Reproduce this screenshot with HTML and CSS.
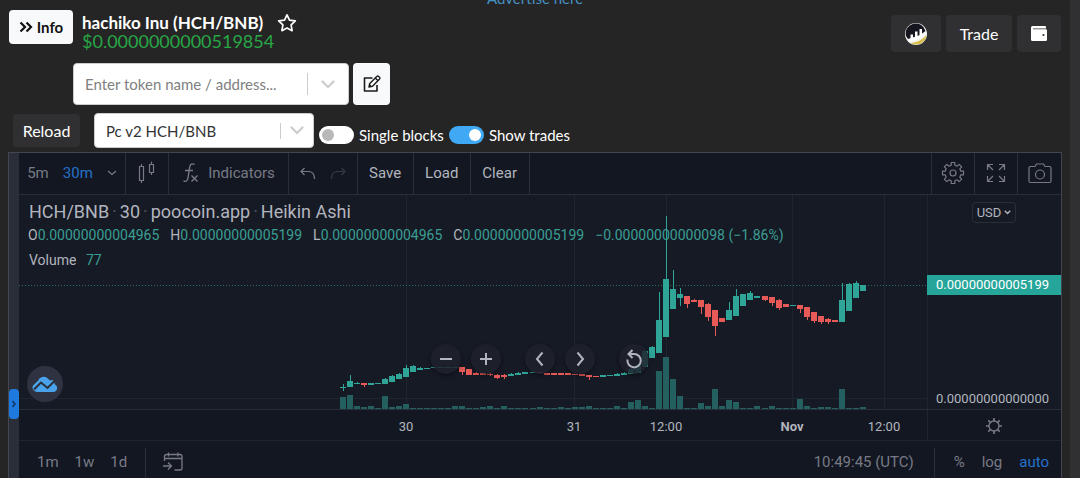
FILE: index.html
```html
<!DOCTYPE html>
<html lang="en">
<head>
<meta charset="utf-8">
<meta name="viewport" content="width=device-width, initial-scale=1">
<title>hachiko Inu (HCH/BNB)</title>
<link rel="stylesheet" href="styles.css">
</head>
<body>
<div class="page">
  <div class="ad"><a class="ad-link" href="#">Advertise here</a></div>

  <header class="top">
    <button class="btn btn-light info" type="button">
      <svg class="info-icon" width="14" height="12" viewBox="0 0 14 12"><path d="M1.500 1.500 6 6l-4.500 4.500M7.500 1.500 12 6l-4.500 4.500" fill="none" stroke="currentColor" stroke-width="2.200"/></svg>
      Info
    </button>
    <div class="token">
      <h1 class="token-name">hachiko Inu (HCH/BNB)
        <button class="star" type="button" aria-label="Favourite"><svg width="20" height="20" viewBox="0 0 20 20"><path d="M10 1.800l2.500 5.300 5.800.8-4.200 4 1 5.800L10 14.900l-5.100 2.800 1-5.800-4.200-4 5.800-.8z" fill="none" stroke="currentColor" stroke-width="1.700" stroke-linejoin="round"/></svg></button>
      </h1>
      <div class="token-price">$0.0000000000519854</div>
    </div>
    <div class="actions">
      <button class="btn btn-dark wide" type="button" aria-label="Chart service">
        <svg width="22" height="22" viewBox="0 0 22 22"><circle cx="11" cy="11" r="11" fill="#f4f4f0"/><path d="M1 13A10 10 0 1 1 20.500 8L15 12 3 16z" fill="#14151f"/><path d="M5.500 20c6-.5 12-3 16-8A10.500 10.500 0 0 1 5.500 20z" fill="#d8bd4a"/><path d="M5.500 16.500v-5h2.500V16M10 15.500V8.500h2.500v6.500M14.500 14V6h2.500v7" fill="#fff"/><path d="M3 17.500Q12 17 18 11.500" fill="none" stroke="#fff" stroke-width="2"/></svg>
      </button>
      <button class="btn btn-dark trade" type="button">Trade</button>
      <button class="btn btn-dark wallet" type="button" aria-label="Wallet">
        <svg width="16" height="15" viewBox="0 0 16 15"><path d="M1.500 0h12.500a1 1 0 0 1 1 1v1.500h-13v.8h13a1 1 0 0 1 1 1V13.500a1.500 1.500 0 0 1-1.500 1.500H1.500A1.500 1.500 0 0 1 0 13.500v-12A1.500 1.500 0 0 1 1.500 0z" fill="#fff"/><circle cx="12.500" cy="9" r="1.100" fill="#303032"/></svg>
      </button>
    </div>
  </header>

  <div class="search">
    <div class="field search-field">
      <input class="field-control" type="text" placeholder="Enter token name / address..." aria-label="Token name or address">
      <span class="field-sep"></span>
      <svg class="field-arrow" width="14" height="9" viewBox="0 0 14 9"><path d="M1.500 1.500 7 7l5.500-5.500" fill="none" stroke="#ccc" stroke-width="2.200" stroke-linecap="round"/></svg>
    </div>
    <button class="btn btn-light edit" type="button" aria-label="Edit">
      <svg width="18" height="18" viewBox="0 0 18 18"><path d="M9.500 3H1.500v13h12.500v-6" fill="none" stroke="#1b1b1b" stroke-width="1.600" stroke-linejoin="round"/><path d="M6 12l.6-3.300L14 1.300q.8-.6 1.600.1l.9.9q.8.800.1 1.600L9.300 11.400zM12.300 3l2.700 2.700M6 12l2-2" fill="none" stroke="#1b1b1b" stroke-width="1.400" stroke-linejoin="round"/></svg>
    </button>
  </div>

  <div class="options">
    <button class="btn btn-dark reload" type="button">Reload</button>
    <div class="field pair-field">
      <select class="field-control pair" aria-label="Pair"><option>Pc v2 HCH/BNB</option></select>
      <span class="field-sep short"></span>
      <svg class="field-arrow" width="14" height="9" viewBox="0 0 14 9"><path d="M1.500 1.500 7 7l5.500-5.500" fill="none" stroke="#ccc" stroke-width="2.200" stroke-linecap="round"/></svg>
    </div>
    <div class="switches">
      <input class="switch" type="checkbox" id="blocks"><label class="switch-label" for="blocks">Single blocks</label>
      <input class="switch" type="checkbox" id="trades" checked><label class="switch-label" for="trades">Show trades</label>
    </div>
  </div>

  <main class="chart">
    <div class="drawer"><button class="drawer-handle" type="button" aria-label="Open drawing tools"><svg width="6" height="8" viewBox="0 0 6 8"><path d="M1.500 1 4 4 1.500 7" fill="none" stroke="#12305c" stroke-width="1.400"/></svg></button></div>
    <div class="board">
      <div class="toolbar">
        <div class="tool-group intervals">
          <button class="tool" type="button">5m</button>
          <button class="tool active" type="button">30m</button>
          <svg width="10" height="6" viewBox="0 0 10 6"><path d="M1 1l4 3.500L9 1" fill="none" stroke="currentColor" stroke-width="1.200"/></svg>
        </div>
        <button class="tool tool-group square" type="button" aria-label="Chart style">
          <svg width="18" height="24" viewBox="0 0 18 24"><path d="M1.500 5.500h4v14h-4zM3.500 3v2.500M3.500 19.500V22M11.500 3.500h4v8h-4zM13.500.500v3M13.500 11.500V14" fill="none" stroke="currentColor" stroke-width="1.200"/></svg>
        </button>
        <button class="tool tool-group indicators" type="button">
          <svg width="18" height="22" viewBox="0 0 18 22"><path d="M12.500 2.500Q8.500.5 7.700 5L6 16Q5.200 20.500 1.500 19M3 8.500h8M9.500 13.500l6 6M15.500 13.500l-6 6" fill="none" stroke="currentColor" stroke-width="1.400"/></svg>
          Indicators
        </button>
        <div class="tool-group history">
          <button class="tool" type="button" aria-label="Undo"><svg width="16" height="13" viewBox="0 0 16 13"><path d="M4.500 1 1 4.500 4.500 8M1 4.500h8Q14.500 5 14.500 12" fill="none" stroke="currentColor" stroke-width="1.200"/></svg></button>
          <button class="tool dim" type="button" aria-label="Redo"><svg width="16" height="13" viewBox="0 0 16 13"><path d="M11.500 1 15 4.500 11.500 8M15 4.500H7Q1.500 5 1.500 12" fill="none" stroke="currentColor" stroke-width="1.200"/></svg></button>
        </div>
        <button class="tool tool-group bright" type="button">Save</button>
        <button class="tool tool-group bright" type="button">Load</button>
        <button class="tool tool-group bright" type="button">Clear</button>
        <div class="tool-space"></div>
        <button class="tool tool-group corner" type="button" aria-label="Settings">
          <svg width="24" height="24" viewBox="0 0 24 24"><path d="M10.200 1.500h3.600v2.700l2.400 1 1.900-1.900 2.600 2.600-1.900 1.900 1 2.400h2.700v3.600h-2.700l-1 2.400 1.900 1.900-2.600 2.600-1.900-1.900-2.400 1v2.700h-3.600v-2.700l-2.400-1-1.900 1.900-2.600-2.600 1.900-1.900-1-2.400H1.500v-3.600h2.700l1-2.400-1.900-1.900 2.600-2.600 1.900 1.900 2.400-1z" fill="none" stroke="currentColor" stroke-width="1.200" stroke-linejoin="round"/><circle cx="12" cy="12" r="3" fill="none" stroke="currentColor" stroke-width="1.200"/></svg>
        </button>
        <button class="tool tool-group corner" type="button" aria-label="Fullscreen">
          <svg width="20" height="20" viewBox="0 0 20 20"><path d="M1.500 7V1.500H7M1.500 1.500l5.500 5.500M13 1.500h5.500V7M18.500 1.500 13 7M1.500 13v5.500H7M1.500 18.500 7 13M18.500 13v5.500H13M18.500 18.500 13 13" fill="none" stroke="currentColor" stroke-width="1.200"/></svg>
        </button>
        <button class="tool tool-group corner last" type="button" aria-label="Snapshot">
          <svg width="24" height="21" viewBox="0 0 24 21"><path d="M2.500 3.500h4.500L8.500 1h7L17 3.500h4.500q1.500 0 1.500 1.500v13q0 1.500-1.500 1.500h-19Q1 19.500 1 18V5q0-1.500 1.500-1.500z" fill="none" stroke="currentColor" stroke-width="1.200"/><circle cx="12" cy="11.500" r="4.500" fill="none" stroke="currentColor" stroke-width="1.200"/></svg>
        </button>
      </div>

      <div class="plot">
        <div class="pane">
          <svg class="series" id="series" viewBox="0 0 908 216" preserveAspectRatio="none" aria-label="Price and volume"></svg>
          <div class="legend">
            <div class="legend-title"><span>HCH/BNB</span><i>·</i><span>30</span><i>·</i><span>poocoin.app</span><i>·</i><span>Heikin Ashi</span></div>
            <div class="legend-values">
              <span>O<b>0.00000000004965</b></span>
              <span>H<b>0.00000000005199</b></span>
              <span>L<b>0.00000000004965</b></span>
              <span>C<b>0.00000000005199</b></span>
              <b>−0.00000000000098 (−1.86%)</b>
            </div>
            <div class="legend-volume">Volume <b>77</b></div>
          </div>
          <div class="badge">
            <svg width="26" height="17" viewBox="0 0 26 17"><path d="M5 16a4.500 4.500 0 0 1-4-6.500l5-4.800a6 6 0 0 1 9.500-2.500l2.500 2.300 3-.5 2 4.500a4 4 0 0 1-1 7.500z" fill="#4aa3ea"/><path d="M2 13.500 9 6.500l6.500 5.500L22.500 5" fill="none" stroke="#2a2e3b" stroke-width="2"/></svg>
          </div>
        </div>
        <div class="price-axis">
          <button class="currency" type="button">USD<svg width="7" height="5" viewBox="0 0 7 5"><path d="M.8.800 3.500 3.500 6.200.8" fill="none" stroke="currentColor" stroke-width="1.400"/></svg></button>
          <div class="last-price">0.00000000005199</div>
          <div class="zero-price">0.00000000000000</div>
        </div>
        <div class="floating">
          <button class="round" type="button" aria-label="Zoom out"><svg width="16" height="16" viewBox="0 0 16 16"><path d="M2 8h12"/></svg></button>
          <button class="round apart" type="button" aria-label="Zoom in"><svg width="16" height="16" viewBox="0 0 16 16"><path d="M2 8h12M8 2v12"/></svg></button>
          <button class="round" type="button" aria-label="Scroll left"><svg width="16" height="16" viewBox="0 0 16 16"><path d="M10.500 1.500 5 8l5.500 6.500"/></svg></button>
          <button class="round apart" type="button" aria-label="Scroll right"><svg width="16" height="16" viewBox="0 0 16 16"><path d="M5.500 1.500 11 8l-5.500 6.500"/></svg></button>
          <button class="round" type="button" aria-label="Reset"><svg width="20" height="20" viewBox="0 0 20 20"><path d="M3.500 10.500A6.700 6.700 0 1 0 10 5H5M8.500 1 4.500 5l4 4"/></svg></button>
        </div>
      </div>

      <div class="time-axis">
        <div class="ticks">
          <span class="t1">30</span><span class="t2">31</span><span class="t3">12:00</span><span class="t4">Nov</span><span class="t5">12:00</span>
        </div>
        <button class="axis-settings" type="button" aria-label="Axis settings"><svg width="18" height="18" viewBox="0 0 18 18"><circle cx="9" cy="9" r="5" fill="none" stroke="currentColor" stroke-width="1.300"/><path d="M9 1v3M9 14v3M1 9h3M14 9h3M3.300 3.300l2.200 2.200M12.500 12.500l2.200 2.200M3.300 14.700l2.200-2.200M12.500 5.500l2.200-2.200" stroke="currentColor" stroke-width="1.700"/></svg></button>
      </div>

      <div class="footer">
        <button class="tool" type="button">1m</button>
        <button class="tool" type="button">1w</button>
        <button class="tool" type="button">1d</button>
        <span class="footer-sep"></span>
        <button class="tool" type="button" aria-label="Go to date"><svg width="22" height="20" viewBox="0 0 22 20"><path d="M2.500 9V4.500q0-2 2-2H18q2 0 2 2V16q0 2-2 2h-5.500M2.500 6.500H20M6.500.5v4M16 .5v4M1 14h8M6 10.500 9.500 14 6 17.500" fill="none" stroke="currentColor" stroke-width="1.300"/></svg></button>
        <span class="clock">10:49:45 (UTC)</span>
        <span class="footer-sep"></span>
        <div class="scales">
          <button class="tool" type="button">%</button>
          <button class="tool" type="button">log</button>
          <button class="tool active" type="button">auto</button>
        </div>
      </div>
    </div>
  </main>
</div>
<script src="chart.js"></script>
</body>
</html>
```

FILE: styles.css
```css
* { box-sizing: border-box; }

body {
  margin: 0;
  background: #252525;
  color: #fff;
  font: 16px/20px Lato, "Liberation Sans", sans-serif;
}

button, input, select { font: inherit; color: inherit; margin: 0; }

button { border: 0; background: none; padding: 0; cursor: pointer; }

svg { display: block; flex: none; }

.page {
  min-height: 100vh;
  padding: 0 8px;
  border-right: 10px solid #303032;
}

.ad {
  display: flex;
  align-items: flex-end;
  justify-content: center;
  height: 8px;
  overflow: hidden;
}

.ad-link { flex: none; color: #4592c4; font-size: 15px; text-decoration: none; }

/* Token header */
.top { display: flex; align-items: flex-start; padding: 2px 1px 0 1px; height: 55px; }

.btn { display: flex; align-items: center; justify-content: center; border-radius: 4px; }
.btn-light { background: #f8f9fa; color: #111; }
.btn-dark { background: #303032; color: #fff; }

.info { width: 64px; height: 34px; gap: 4px; font-size: 15px; font-weight: 700; }

.token { margin: 3px 0 0 9px; }
.token-name { display: flex; align-items: center; gap: 14px; margin: 0; height: 20px; font-size: 17px; font-weight: 700; }
.star { color: #fff; }
.token-price { font-size: 18px; line-height: 16px; color: #28a745; }

.actions { display: flex; gap: 5px; margin: 5px 0 0 auto; }
.actions .btn { height: 37px; }
.wide { width: 50px; }
.trade { width: 66px; }
.wallet { width: 44px; }

/* Search and options */
.search { display: flex; gap: 4px; padding-left: 65px; }

.field { display: flex; align-items: center; background: #fff; border: 1px solid #ccc; border-radius: 4px; color: #333; font-size: 15px; }
.field-control {
  flex: 1;
  min-width: 0;
  height: 100%;
  padding: 0 11px;
  border: 0;
  outline: 0;
  background: none;
  appearance: none;
}
.field-control::placeholder { color: #808080; opacity: 1; }
.field-sep { width: 1px; height: 22px; background: #ccc; }
.field-arrow { margin: 0 13px; }
.field-sep.short { height: 16px; }
.field-sep.short + .field-arrow { margin: 0 9px; }

.search-field { width: 276px; height: 42px; }
.edit { width: 37px; height: 42px; }

.options { display: flex; align-items: center; padding: 8px 0 4px 5px; }
.reload { width: 67px; height: 33px; }
.pair-field { width: 220px; height: 35px; margin-left: 14px; }
.switches { display: flex; align-items: center; gap: 5px; padding: 8px 0 0 5px; height: 35px; font-size: 15px; }

.switch {
  appearance: none;
  display: flex;
  width: 35px;
  height: 18px;
  padding: 3px;
  border-radius: 9px;
  background: #fff;
}
.switch::before { content: ""; width: 12px; height: 12px; border-radius: 50%; background: #b8b8b8; }
.switch:checked { justify-content: flex-end; background: #3fa9f5; }
.switch:checked::before { background: #fff; }
.switch-label { line-height: 22px; }

/* Chart */
.chart {
  display: flex;
  border: 1px solid #434651;
  border-width: 1px 1px 0 1px;
  background: #131722;
  color: #787b86;
  font: 15px/18px Roboto, "Liberation Sans", sans-serif;
}

.drawer { display: flex; align-items: flex-end; width: 10px; padding-bottom: 59px; background: #2a2e39; }
.drawer-handle { display: flex; align-items: center; justify-content: center; width: 10px; height: 30px; border-radius: 4px; background: #1f7ae0; }

.board { flex: 1; min-width: 0; }

.toolbar { display: flex; height: 42px; border-bottom: 1px solid #2a2e39; }
.tool-group { display: flex; align-items: center; justify-content: center; border-right: 1px solid #2a2e39; padding-bottom: 1px; }
.tool-space { flex: 1; border-right: 1px solid #2a2e39; }
.tool { color: #787b86; }
.tool.active { color: #2472cc; }
.tool.dim { color: #363a45; }
.tool.bright { padding: 0 12px 1px 11px; color: #b2b5be; }
.tool-group.last { border-right: 0; }
.square { width: 43px; }
.corner { width: 43px; }
.intervals { width: 107px; gap: 14px; }
.indicators { width: 120px; gap: 8px; }
.history { width: 69px; gap: 14px; }

.plot { position: relative; display: flex; height: 215px; background: #161a25; }
.pane { position: relative; flex: 1; min-width: 0; border-bottom: 1px solid #2a2e39; }
.series { position: absolute; inset: 0; width: 100%; height: 216px; }

.legend { position: relative; padding: 6px 0 0 9px; white-space: nowrap; color: #b2b5be; }
.legend b { font-weight: 400; color: #3a9e94; }
.legend-title { display: flex; gap: 3px; padding-left: 1px; font-size: 18px; line-height: 22px; }
.legend-title i { font-style: normal; color: #50535e; }
.legend-values { display: flex; gap: 11px; font-size: 14px; line-height: 24px; }
.legend-volume { padding: 1px 0 0 1px; font-size: 14px; line-height: 24px; }
.legend-volume b { padding-left: 6px; }

.badge {
  position: absolute;
  left: 8px;
  bottom: 7px;
  display: flex;
  align-items: center;
  justify-content: center;
  width: 36px;
  height: 36px;
  border-radius: 50%;
  background: #2f3240;
}

.price-axis {
  display: flex;
  flex-direction: column;
  width: 134px;
  border-bottom: 1px solid #2a2e39;
  box-shadow: inset 1px 0 #20242f;
  font-size: 13px;
  color: #b2b5be;
}
.currency {
  display: flex;
  align-items: center;
  align-self: center;
  gap: 3px;
  height: 21px;
  margin: 7px 0 52px;
  padding: 0 4px;
  border: 1px solid #2a2e39;
  border-radius: 4px;
}
.last-price { padding-left: 9px; line-height: 20px; background: #26a69a; color: #fff; }
.zero-price { margin: auto 0 1px; padding-left: 9px; line-height: 18px; }

.floating { position: absolute; left: 0; right: 0; bottom: 36px; display: flex; justify-content: center; gap: 10px; padding-right: 11px; padding-left: 10px; pointer-events: none; }
.round {
  display: flex;
  align-items: center;
  justify-content: center;
  width: 30px;
  height: 30px;
  border-radius: 50%;
  background: rgba(30, 34, 45, 0.85);
  box-shadow: 0 2px 4px rgba(0, 0, 0, 0.4);
  pointer-events: auto;
}
.round.apart { margin-right: 14px; }
.round path { fill: none; stroke: #b2b5be; stroke-width: 2; }

.time-axis { display: flex; height: 31px; border-bottom: 1px solid #20242f; font-size: 13px; color: #b2b5be; }
.ticks {
  flex: 1;
  display: grid;
  grid-template-columns: 357fr 60fr 108fr 60fr 32fr 60fr 66fr 60fr 32fr 60fr 13fr;
  align-items: center;
  padding-top: 4px;
  text-align: center;
}
.t1 { grid-column: 2; }
.t2 { grid-column: 4; }
.t3 { grid-column: 6; }
.t4 { grid-column: 8; font-weight: 700; }
.t5 { grid-column: 10; }
.axis-settings { display: flex; align-items: center; justify-content: center; width: 134px; padding-top: 2px; box-shadow: inset 1px 0 #20242f; color: #787b86; }

.footer { display: flex; align-items: center; gap: 16px; height: 37px; padding: 5px 12px 0 18px; }
.footer-sep { align-self: stretch; width: 1px; margin: 2px 0 0 2px; background: #2a2e39; }
.scales { display: flex; gap: 17px; padding-left: 3px; }
.clock { margin: 0 2px 0 auto; }
```

FILE: chart.js
```js
// Each bar: [high, body top, body bottom, low, direction, volume height]
const bars = [
  [189,192,193,196,1,12],[180,186,192,192,1,14],[187,188,189,189,1,3],[188,188,190,192,0,2],
  [188,188,190,190,1,3],[188,188,189,189,1,1],[183,184,189,189,1,13],[180,181,187,187,1,2],
  [178,179,184,184,1,3],[170,173,182,182,1,5],[170,171,177,177,1,1],[172,173,175,175,1,1],
  [173,173,174,174,1,1],[172,172,173,173,1,1],[172,172,173,173,1,1],[172,172,173,173,1,1],
  [172,172,173,173,1,3],[172,172,177,180,0,3],[174,174,180,180,0,1],[177,178,180,180,0,1],
  [178,178,180,180,0,2],[178,179,180,181,0,3],[179,180,183,184,0,1],[179,180,182,184,0,3],
  [178,179,181,181,1,1],[177,178,180,180,1,1],[177,177,179,179,1,1],[177,177,178,178,1,1],
  [177,177,178,178,0,2],[178,178,180,180,0,1],[178,178,180,180,0,1],[178,178,180,180,0,2],
  [178,178,180,180,0,1],[179,179,180,180,0,2],[179,179,181,181,0,2],[180,180,182,185,0,3],
  [181,181,182,182,0,1],[180,180,182,182,1,1],[180,180,181,181,1,1],[178,179,181,181,1,3],
  [177,178,180,180,1,1],[173,174,179,179,1,7],[169,170,178,178,1,9],[155,156,172,172,1,3],
  [151,152,163,163,1,1],[97,125,158,158,1,38],[21,84,142,142,1,52],[75,94,114,114,1,30],
  [93,99,103,111,1,13],[101,101,109,113,0,1],[104,105,107,107,0,1],[105,105,112,119,0,6],
  [108,109,122,126,0,3],[115,115,131,141,0,20],[123,123,127,127,0,3],[107,115,125,125,1,9],
  [94,101,121,121,1,7],[99,99,111,111,1,1],[96,98,105,105,1,1],[101,101,103,103,1,3],
  [101,101,105,106,0,1],[102,102,108,111,0,3],[104,105,113,115,0,1],[109,109,112,112,0,1],
  [110,110,111,111,1,1],[110,110,114,118,0,10],[112,112,122,125,0,3],[117,117,126,128,0,1],
  [121,121,127,129,0,2],[123,124,127,129,0,2],[125,125,127,127,0,1],[88,105,127,127,1,20],
  [88,89,116,116,1,1],[86,88,103,103,1,1],[90,90,96,96,1,2]
];

const width = 908, base = 214, first = 323.7, step = 7.03;
const parts = [];
const rect = (x, y, w, h, fill) =>
  parts.push(`<rect x="${x}" y="${y}" width="${w}" height="${h}" fill="${fill}"/>`);

for (const x of [387, 555, 647, 773, 865]) rect(x, 0, 1, 216, "#20242f");
rect(0, 203, width, 1, "#20242f");
for (let x = 0; x < width; x += 3) rect(x, 90, 1, 1, "#2a6a6a");

bars.forEach(([high, top, bottom, low, up, volume], i) => {
  const x = Math.round(first + i * step);
  const color = up ? "#2fa598" : "#e75a57";
  rect(x - 3, base - volume, 6, volume, "#23605f");
  rect(x, high, 1, low - high, color);
  rect(x - 3, top, 6, bottom - top, color);
});

document.getElementById("series").innerHTML = parts.join("");
```
